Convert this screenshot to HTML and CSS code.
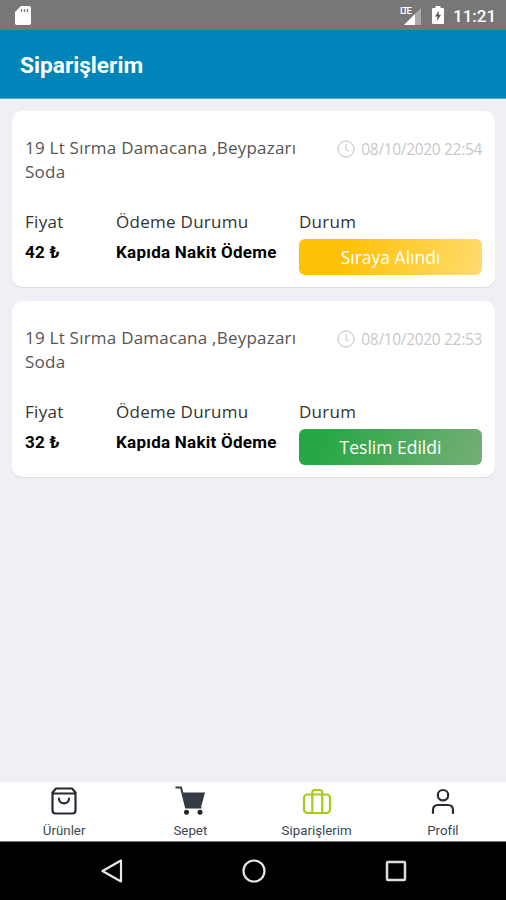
FILE: index.html
```html
<!DOCTYPE html>
<html lang="tr">
<head>
<meta charset="utf-8">
<title>Siparişlerim</title>
<link rel="stylesheet" href="styles.css">
</head>
<body>
<div class="status">
  <svg class="sd" width="16" height="19" viewBox="0 0 16 19"><path d="M6 0H14Q16 0 16 2V17Q16 19 14 19H2Q0 19 0 17V6Z" fill="#fff"/><path d="M6.500 3v3M9.500 3v3M12.500 3v3" stroke="#777" stroke-width="1.300"/></svg>
  <div class="signal">
    <span class="lte">LTE</span>
    <svg width="17" height="17" viewBox="0 0 17 17"><path d="M17 0V17H0Z" fill="#aaa"/><path d="M11 6V17H0Z" fill="#fff"/></svg>
  </div>
  <svg class="battery" width="12" height="18" viewBox="0 0 12 18"><path d="M3.500 0h5v2H11q1 0 1 1v14q0 1-1 1H1q-1 0-1-1V3q0-1 1-1h2.500Z" fill="#fff"/><path d="M7 4.500 3 10.500H5.500L5 15 9 8.800H6.500Z" fill="#555"/></svg>
  <span class="time">11:21</span>
</div>
<header class="header"><h1>Siparişlerim</h1></header>
<main class="orders">
  <article class="card">
    <div class="top">
      <p class="items">19 Lt Sırma Damacana ,Beypazarı Soda</p>
      <div class="date">
        <svg width="18" height="18" viewBox="0 0 18 18" fill="none" stroke="#d0d0d0" stroke-width="1.300"><circle cx="9" cy="9" r="8"/><path d="M9 4v5.500l3 1.500"/></svg>
        <span>08/10/2020 22:54</span>
      </div>
    </div>
    <div class="details">
      <div><span class="label">Fiyat</span><b>42 ₺</b></div>
      <div><span class="label">Ödeme Durumu</span><b>Kapıda Nakit Ödeme</b></div>
      <div><span class="label">Durum</span><span class="state queued">Sıraya Alındı</span></div>
    </div>
  </article>
  <article class="card">
    <div class="top">
      <p class="items">19 Lt Sırma Damacana ,Beypazarı Soda</p>
      <div class="date">
        <svg width="18" height="18" viewBox="0 0 18 18" fill="none" stroke="#d0d0d0" stroke-width="1.300"><circle cx="9" cy="9" r="8"/><path d="M9 4v5.500l3 1.500"/></svg>
        <span>08/10/2020 22:53</span>
      </div>
    </div>
    <div class="details">
      <div><span class="label">Fiyat</span><b>32 ₺</b></div>
      <div><span class="label">Ödeme Durumu</span><b>Kapıda Nakit Ödeme</b></div>
      <div><span class="label">Durum</span><span class="state delivered">Teslim Edildi</span></div>
    </div>
  </article>
</main>
<nav class="tabs">
  <a class="tab"><svg width="32" height="34" viewBox="0 0 32 34" fill="none" stroke="#262b33" stroke-width="2.200" stroke-linejoin="round" stroke-linecap="round"><path d="M8 6.500h16L27.500 10.500V28.500Q27.500 31.500 24.500 31.500H7.500Q4.500 31.500 4.500 28.500V10.500ZM4.500 11.500h23M11 16.500c0 6.500 10 6.500 10 0"/></svg><span>Ürünler</span></a>
  <a class="tab"><svg width="32" height="34" viewBox="0 0 32 34"><path d="M1.500 5.500H7L12 25.500H27.500" fill="none" stroke="#343a46" stroke-width="2"/><path d="M8 10.500H31L27.800 22.500Q27.300 25.500 25 25.500H13.500Q11.500 25.500 11 23Z" fill="#343a46"/><circle cx="12.500" cy="30.300" r="2.500" fill="#20242b"/><circle cx="26" cy="30.300" r="2.500" fill="#20242b"/></svg><span>Sepet</span></a>
  <a class="tab"><svg width="32" height="34" viewBox="0 0 32 34" fill="none" stroke="#a5cc16" stroke-width="2.200"><rect x="3" y="12.500" width="26" height="18.500" rx="3.500"/><path d="M11.300 31V10.500Q11.300 8 13.800 8H18.700Q21.200 8 21.200 10.500V31"/></svg><span>Siparişlerim</span></a>
  <a class="tab"><svg width="32" height="34" viewBox="0 0 32 34" fill="none" stroke="#262b33" stroke-width="2.200" stroke-linecap="round"><circle cx="16" cy="13.200" r="5.200"/><path d="M6 31V28Q6 23 11 23H21Q26 23 26 28V31"/></svg><span>Profil</span></a>
</nav>
<div class="system">
  <svg width="22" height="24" viewBox="0 0 22 24" fill="none" stroke="#e8e8e8" stroke-width="2.200" stroke-linejoin="round"><path d="M20 1.500V22.500L1.500 12Z"/></svg>
  <svg width="24" height="24" viewBox="0 0 24 24" fill="none" stroke="#e8e8e8" stroke-width="2.200"><circle cx="12" cy="12" r="10.500"/></svg>
  <svg width="22" height="22" viewBox="0 0 22 22" fill="none" stroke="#ddd" stroke-width="2.500"><rect x="2" y="2" width="18" height="18" rx="1"/></svg>
</div>
</body>
</html>
```

FILE: styles.css
```css
* { box-sizing: border-box; }
body { margin: 0; width: 506px; height: 900px; display: flex; flex-direction: column; overflow: hidden; background: #eff0f5; font-family: "Open Sans", sans-serif; }
.status { height: 30px; background: #777; color: #fff; display: flex; align-items: center; padding: 0 10px 0 15px; }
.signal { position: relative; margin-left: auto; margin-right: 11px; width: 22px; height: 19px; display: flex; justify-content: flex-end; align-items: flex-end; }
.lte { position: absolute; left: 1px; top: 0; font: 500 9.500px/10px Roboto, sans-serif; letter-spacing: -1.600px; }
.time { margin-left: 9px; width: 43px; font: 500 17px/30px Roboto, sans-serif; padding-top: 2px; }
.header { height: 69px; background: #0085ba; border-bottom: 1px solid #5aa9cb; padding-left: 20px; }
h1 { margin: 0; color: #fff; font: bold 22.700px/71px Roboto, sans-serif; }
.orders { flex: 1; padding: 12px 11px 0 12px; display: flex; flex-direction: column; gap: 14px; }
.card { height: 176px; background: #fff; border-radius: 10px; padding: 25px 13px 0; box-shadow: 0 1px 1px #d8d9dd; }
.top { display: flex; justify-content: space-between; color: #555; }
.items { margin: 0; width: 290px; font-size: 17px; line-height: 24px; letter-spacing: 0.230px; }
.date { display: flex; align-items: center; height: 25px; gap: 6px; color: #c8c8c8; font-size: 15.500px; letter-spacing: -0.320px; white-space: nowrap; }
.details { display: grid; grid-template-columns: 91px 183px 183px; padding-top: 26px; }
.details > div { display: flex; flex-direction: column; align-items: flex-start; }
.label { font-size: 17px; line-height: 24px; letter-spacing: 0.280px; color: #333; white-space: nowrap; }
b { font: bold 17px/24px Roboto, sans-serif; letter-spacing: 0.260px; margin-top: 6px; color: #000; white-space: nowrap; }
.state { margin-top: 5px; width: 183px; height: 36px; border-radius: 6px; color: #fff; text-align: center; font-size: 17.500px; line-height: 36px; }
.queued { background: linear-gradient(110deg, #ffc107 25%, #ffdc70); }
.delivered { background: linear-gradient(110deg, #28a745 15%, #76ae76); }
.tabs { height: 60px; background: #fff; border-bottom: 1px solid #777; display: grid; grid-template-columns: repeat(4, 1fr); padding-left: 1px; }
.tab { display: flex; flex-direction: column; align-items: center; color: #3d4653; }
.tab span { font: 13.300px/16px Roboto, sans-serif; margin-top: 7px; }
.system { height: 58px; background: #000; display: flex; align-items: center; justify-content: space-between; padding: 0 99px 0 101px; }
```
